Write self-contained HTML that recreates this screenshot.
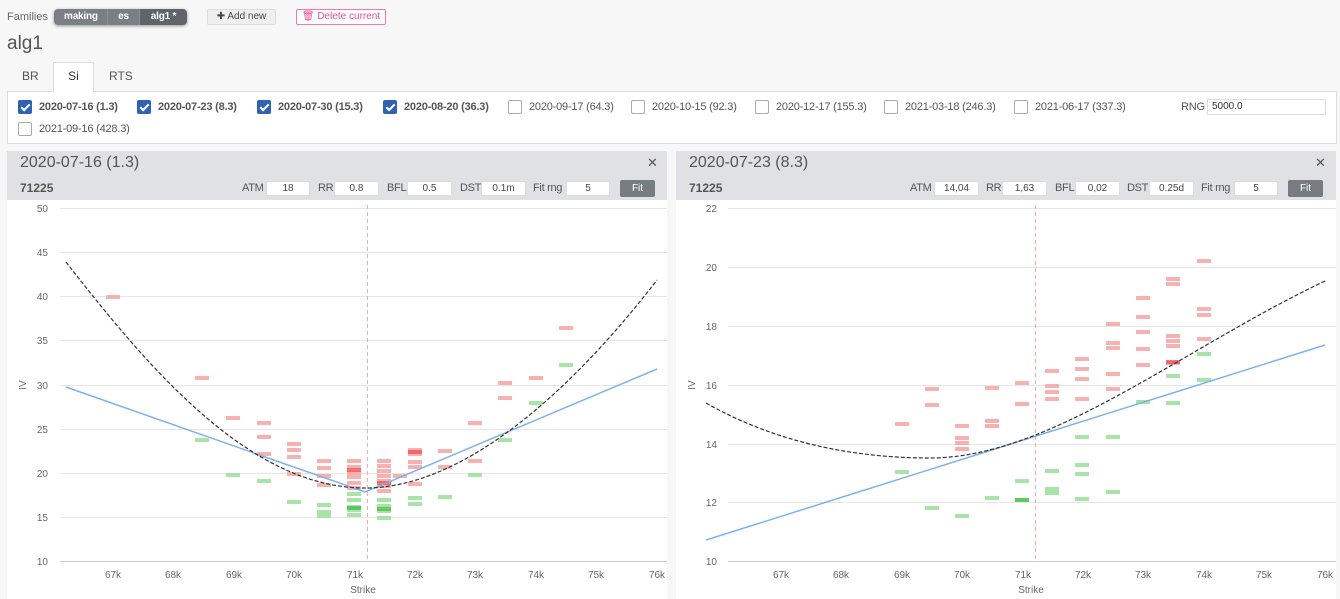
<!DOCTYPE html>
<html><head><meta charset="utf-8"><style>
*{box-sizing:border-box}
body{margin:0;width:1340px;height:599px;overflow:hidden;background:#f7f7f7;font-family:"Liberation Sans",sans-serif;color:#555;font-size:11px}
.abs{position:absolute}
.seg{background:#7a7f86;color:#fff;font-weight:bold;font-size:10px;height:16px;line-height:16px;padding:0 10px;display:inline-block;border-right:1px solid #8c9096;letter-spacing:-0.2px}
.inp{background:#fff;border:1px solid #ddd;border-radius:2px;height:15px;text-align:center;font-size:10px;line-height:14px;color:#444;position:absolute}
.lbl{position:absolute;font-size:11px;color:#555;letter-spacing:-0.3px}
.cb{position:absolute;width:14px;height:14px;border:1px solid #aaa;border-radius:2px;background:#fff}
.cb.on{background:#2f62b5;border-color:#2f62b5}
.cb.on:after{content:"";position:absolute;left:4px;top:1px;width:3px;height:7px;border:solid #fff;border-width:0 2px 2px 0;transform:rotate(45deg)}
.ct{position:absolute;font-size:11px;color:#555;letter-spacing:-0.2px}
.ct.b{font-weight:bold}
</style></head><body>
<div class="abs" style="left:7px;top:11px;font-size:11px;color:#666">Families</div>
<div class="abs" style="left:54px;top:9px;border-radius:4px;overflow:hidden;box-shadow:0 1px 3px rgba(0,0,0,.4);height:16px;white-space:nowrap;font-size:0"><span class="seg" style="width:54px">making</span><span class="seg" style="width:32px;text-align:center">es</span><span class="seg" style="background:#5f646b;border:0;width:47px;text-align:center">alg1 *</span></div>
<div class="abs" style="left:207px;top:9px;width:69px;height:16px;border:1px solid #ddd;background:#efefef;border-radius:2px;font-size:10px;text-align:center;line-height:14px;color:#444">✚ Add new</div>
<div class="abs" style="left:296px;top:9px;width:90px;height:16px;border:1px solid #f07ab0;background:#fff;border-radius:2px;font-size:10px;text-align:center;line-height:14px;color:#ea4c9a">🗑 Delete current</div>
<div class="abs" style="left:7px;top:33px;font-size:19px;color:#555">alg1</div>
<div class="abs" style="left:7px;top:91px;width:1330px;height:1px;background:#ddd"></div>
<div class="abs" style="left:22px;top:69px;font-size:12px;color:#555">BR</div>
<div class="abs" style="left:53px;top:62px;width:41px;height:31px;background:#fff;border:1px solid #ddd;border-bottom:none;text-align:center;line-height:27px;font-size:12px;color:#333">Si</div>
<div class="abs" style="left:109px;top:69px;font-size:12px;color:#555">RTS</div>
<div class="abs" style="left:7px;top:92px;width:1330px;height:52px;background:#fff;border:1px solid #ddd;border-top:none"></div>
<div class="cb on" style="left:18px;top:100px"></div><div class="ct b" style="left:39px;top:101px">2020-07-16 (1.3)</div>
<div class="cb on" style="left:137px;top:100px"></div><div class="ct b" style="left:158px;top:101px">2020-07-23 (8.3)</div>
<div class="cb on" style="left:257px;top:100px"></div><div class="ct b" style="left:278px;top:101px">2020-07-30 (15.3)</div>
<div class="cb on" style="left:383px;top:100px"></div><div class="ct b" style="left:404px;top:101px">2020-08-20 (36.3)</div>
<div class="cb" style="left:508px;top:100px"></div><div class="ct" style="left:529px;top:101px">2020-09-17 (64.3)</div>
<div class="cb" style="left:631px;top:100px"></div><div class="ct" style="left:652px;top:101px">2020-10-15 (92.3)</div>
<div class="cb" style="left:755px;top:100px"></div><div class="ct" style="left:776px;top:101px">2020-12-17 (155.3)</div>
<div class="cb" style="left:884px;top:100px"></div><div class="ct" style="left:905px;top:101px">2021-03-18 (246.3)</div>
<div class="cb" style="left:1014px;top:100px"></div><div class="ct" style="left:1035px;top:101px">2021-06-17 (337.3)</div>
<div class="ct" style="left:1181px;top:101px">RNG</div>
<div class="abs" style="left:1207px;top:99px;width:119px;height:16px;border:1px solid #ddd;font-size:10px;line-height:14px;padding-left:4px;color:#333">5000.0</div>
<div class="cb" style="left:18px;top:122px"></div><div class="ct" style="left:39px;top:123px">2021-09-16 (428.3)</div>

<div class="abs" style="left:7px;top:151px;width:660px;height:448px;background:#fff"></div>
<div class="abs" style="left:7px;top:151px;width:660px;height:49px;background:#dfe1e5"></div>
<div class="abs" style="left:20px;top:154px;font-size:16px;color:#555">2020-07-16 (1.3)</div>
<div class="abs" style="left:647px;top:155px;font-size:13px;color:#555">✕</div>
<div class="abs" style="left:20px;top:181px;font-size:12px;font-weight:bold;color:#555">71225</div>
<div class="lbl" style="left:242px;top:182px">ATM</div><div class="inp" style="left:266px;top:181px;width:44px">18</div>
<div class="lbl" style="left:318px;top:182px">RR</div><div class="inp" style="left:334px;top:181px;width:45px">0.8</div>
<div class="lbl" style="left:387px;top:182px">BFL</div><div class="inp" style="left:407px;top:181px;width:45px">0.5</div>
<div class="lbl" style="left:460px;top:182px">DST</div><div class="inp" style="left:481px;top:181px;width:45px">0.1m</div>
<div class="lbl" style="left:533px;top:182px">Fit rng</div><div class="inp" style="left:566px;top:181px;width:44px">5</div>
<div class="abs" style="left:620px;top:180px;width:35px;height:17px;background:#777c83;border-radius:2px;color:#fff;font-size:10px;text-align:center;line-height:17px">Fit</div>

<div class="abs" style="left:676px;top:151px;width:660px;height:448px;background:#fff"></div>
<div class="abs" style="left:676px;top:151px;width:660px;height:49px;background:#dfe1e5"></div>
<div class="abs" style="left:689px;top:154px;font-size:16px;color:#555">2020-07-23 (8.3)</div>
<div class="abs" style="left:1315px;top:155px;font-size:13px;color:#555">✕</div>
<div class="abs" style="left:689px;top:181px;font-size:12px;font-weight:bold;color:#555">71225</div>
<div class="lbl" style="left:910px;top:182px">ATM</div><div class="inp" style="left:934px;top:181px;width:45px">14,04</div>
<div class="lbl" style="left:986px;top:182px">RR</div><div class="inp" style="left:1002px;top:181px;width:45px">1,63</div>
<div class="lbl" style="left:1055px;top:182px">BFL</div><div class="inp" style="left:1075px;top:181px;width:45px">0,02</div>
<div class="lbl" style="left:1127px;top:182px">DST</div><div class="inp" style="left:1149px;top:181px;width:45px">0.25d</div>
<div class="lbl" style="left:1201px;top:182px">Fit rng</div><div class="inp" style="left:1234px;top:181px;width:44px">5</div>
<div class="abs" style="left:1288px;top:180px;width:35px;height:17px;background:#777c83;border-radius:2px;color:#fff;font-size:10px;text-align:center;line-height:17px">Fit</div>

<svg class="abs" style="left:0;top:0" width="1340" height="599" font-family="Liberation Sans, sans-serif" font-size="10" fill="#666">
<g stroke="#e6e6e6" stroke-width="1">
<line x1="60" y1="208.5" x2="667" y2="208.5"/><line x1="60" y1="252.5" x2="667" y2="252.5"/><line x1="60" y1="296.5" x2="667" y2="296.5"/><line x1="60" y1="340.5" x2="667" y2="340.5"/><line x1="60" y1="385.5" x2="667" y2="385.5"/><line x1="60" y1="429.5" x2="667" y2="429.5"/><line x1="60" y1="473.5" x2="667" y2="473.5"/><line x1="60" y1="517.5" x2="667" y2="517.5"/><line x1="60" y1="561.5" x2="667" y2="561.5" stroke="#ccc"/>
<line x1="728" y1="208.5" x2="1336" y2="208.5"/><line x1="728" y1="267.5" x2="1336" y2="267.5"/><line x1="728" y1="326.5" x2="1336" y2="326.5"/><line x1="728" y1="385.5" x2="1336" y2="385.5"/><line x1="728" y1="444.5" x2="1336" y2="444.5"/><line x1="728" y1="502.5" x2="1336" y2="502.5"/><line x1="728" y1="561.5" x2="1336" y2="561.5" stroke="#ccc"/>
</g>
<g text-anchor="end">
<text x="48" y="212">50</text><text x="48" y="256">45</text><text x="48" y="300">40</text><text x="48" y="344">35</text><text x="48" y="389">30</text><text x="48" y="433">25</text><text x="48" y="477">20</text><text x="48" y="521">15</text><text x="48" y="565">10</text>
<text x="717" y="212">22</text><text x="717" y="271">20</text><text x="717" y="330">18</text><text x="717" y="389">16</text><text x="717" y="448">14</text><text x="717" y="506">12</text><text x="717" y="565">10</text>
</g>
<g text-anchor="middle">
<text x="113" y="578">67k</text><text x="173" y="578">68k</text><text x="234" y="578">69k</text><text x="294" y="578">70k</text><text x="355" y="578">71k</text><text x="415" y="578">72k</text><text x="475" y="578">73k</text><text x="536" y="578">74k</text><text x="596" y="578">75k</text><text x="657" y="578">76k</text>
<text x="781" y="578">67k</text><text x="841" y="578">68k</text><text x="902" y="578">69k</text><text x="962" y="578">70k</text><text x="1023" y="578">71k</text><text x="1083" y="578">72k</text><text x="1143" y="578">73k</text><text x="1204" y="578">74k</text><text x="1264" y="578">75k</text><text x="1325" y="578">76k</text>
<text x="363" y="593">Strike</text><text x="1031" y="593">Strike</text>
<text transform="translate(26,385) rotate(-90)">IV</text><text transform="translate(695,385) rotate(-90)">IV</text>
</g>
<line x1="367.5" y1="205" x2="367.5" y2="561" stroke="#f5a8b0" stroke-dasharray="4,3"/>
<line x1="1035.5" y1="205" x2="1035.5" y2="561" stroke="#f5a8b0" stroke-dasharray="4,3"/>
<g fill="#f7a4a4" opacity="0.85">
<rect x="106" y="295" width="14" height="4"/><rect x="195" y="376" width="14" height="4"/><rect x="226" y="416" width="14" height="4"/>
<rect x="257" y="421" width="14" height="4"/><rect x="257" y="435" width="14" height="4"/><rect x="257" y="452" width="14" height="4"/>
<rect x="287" y="442" width="14" height="4"/><rect x="287" y="448" width="14" height="4"/><rect x="287" y="455" width="14" height="4"/><rect x="287" y="472" width="14" height="4"/>
<rect x="317" y="459" width="14" height="4"/><rect x="317" y="466" width="14" height="4"/><rect x="317" y="474" width="14" height="4"/><rect x="317" y="483" width="14" height="4"/>
<rect x="347" y="459" width="14" height="4"/><rect x="347" y="465" width="14" height="4"/><rect x="347" y="471" width="14" height="4"/><rect x="347" y="475" width="14" height="4"/><rect x="347" y="481" width="14" height="4"/><rect x="347" y="486" width="14" height="4"/>
<rect x="377" y="459" width="14" height="4"/><rect x="377" y="464" width="14" height="4"/><rect x="377" y="469" width="14" height="4"/><rect x="377" y="474" width="14" height="4"/><rect x="377" y="479" width="14" height="4"/><rect x="377" y="484" width="14" height="4"/><rect x="377" y="489" width="14" height="4"/>
<rect x="393" y="474" width="14" height="4"/>
<rect x="408" y="448" width="14" height="4"/><rect x="408" y="452" width="14" height="4"/><rect x="408" y="460" width="14" height="4"/><rect x="408" y="465" width="14" height="4"/><rect x="408" y="482" width="14" height="4"/>
<rect x="438" y="449" width="14" height="4"/><rect x="438" y="465" width="14" height="4"/><rect x="468" y="421" width="14" height="4"/><rect x="468" y="459" width="14" height="4"/>
<rect x="498" y="381" width="14" height="4"/><rect x="498" y="396" width="14" height="4"/><rect x="529" y="376" width="14" height="4"/><rect x="559" y="326" width="14" height="4"/>
<rect x="895" y="422" width="14" height="4"/><rect x="925" y="387" width="14" height="4"/><rect x="925" y="403" width="14" height="4"/>
<rect x="955" y="424" width="14" height="4"/><rect x="955" y="436" width="14" height="4"/><rect x="955" y="441" width="14" height="4"/><rect x="955" y="447" width="14" height="4"/>
<rect x="985" y="386" width="14" height="4"/><rect x="985" y="419" width="14" height="4"/><rect x="985" y="424" width="14" height="4"/>
<rect x="1015" y="381" width="14" height="4"/><rect x="1015" y="402" width="14" height="4"/>
<rect x="1045" y="369" width="14" height="4"/><rect x="1045" y="384" width="14" height="4"/><rect x="1045" y="390" width="14" height="4"/><rect x="1045" y="397" width="14" height="4"/>
<rect x="1075" y="357" width="14" height="4"/><rect x="1075" y="367" width="14" height="4"/><rect x="1075" y="377" width="14" height="4"/><rect x="1075" y="397" width="14" height="4"/>
<rect x="1106" y="322" width="14" height="4"/><rect x="1106" y="341" width="14" height="4"/><rect x="1106" y="346" width="14" height="4"/><rect x="1106" y="372" width="14" height="4"/><rect x="1106" y="387" width="14" height="4"/>
<rect x="1136" y="296" width="14" height="4"/><rect x="1136" y="315" width="14" height="4"/><rect x="1136" y="330" width="14" height="4"/><rect x="1136" y="347" width="14" height="4"/><rect x="1136" y="363" width="14" height="4"/>
<rect x="1166" y="277" width="14" height="4"/><rect x="1166" y="282" width="14" height="4"/><rect x="1166" y="334" width="14" height="4"/><rect x="1166" y="339" width="14" height="4"/><rect x="1166" y="344" width="14" height="4"/><rect x="1166" y="361" width="14" height="4"/>
<rect x="1197" y="259" width="14" height="4"/><rect x="1197" y="307" width="14" height="4"/><rect x="1197" y="313" width="14" height="4"/><rect x="1197" y="337" width="14" height="4"/>
</g>
<g fill="#ee5555" opacity="0.8"><rect x="347" y="468" width="14" height="4"/><rect x="377" y="481" width="14" height="4"/><rect x="408" y="450" width="14" height="4"/><rect x="1166" y="360" width="14" height="4"/></g>
<g fill="#9fe09f" opacity="0.9">
<rect x="195" y="438" width="14" height="4"/><rect x="226" y="473" width="14" height="4"/><rect x="257" y="479" width="14" height="4"/><rect x="287" y="500" width="14" height="4"/>
<rect x="317" y="503" width="14" height="4"/><rect x="317" y="510" width="14" height="4"/><rect x="317" y="514" width="14" height="4"/>
<rect x="347" y="492" width="14" height="4"/><rect x="347" y="498" width="14" height="4"/><rect x="347" y="505" width="14" height="4"/><rect x="347" y="508" width="14" height="4"/><rect x="347" y="513" width="14" height="4"/>
<rect x="377" y="498" width="14" height="4"/><rect x="377" y="504" width="14" height="4"/><rect x="377" y="509" width="14" height="4"/><rect x="377" y="516" width="14" height="4"/>
<rect x="408" y="496" width="14" height="4"/><rect x="408" y="502" width="14" height="4"/><rect x="438" y="495" width="14" height="4"/><rect x="468" y="473" width="14" height="4"/>
<rect x="498" y="438" width="14" height="4"/><rect x="529" y="401" width="14" height="4"/><rect x="559" y="363" width="14" height="4"/>
<rect x="895" y="470" width="14" height="4"/><rect x="925" y="506" width="14" height="4"/><rect x="955" y="514" width="14" height="4"/><rect x="985" y="496" width="14" height="4"/>
<rect x="1015" y="479" width="14" height="4"/><rect x="1015" y="498" width="14" height="4"/>
<rect x="1045" y="469" width="14" height="4"/><rect x="1045" y="487" width="14" height="4"/><rect x="1045" y="491" width="14" height="4"/>
<rect x="1075" y="435" width="14" height="4"/><rect x="1075" y="463" width="14" height="4"/><rect x="1075" y="472" width="14" height="4"/><rect x="1075" y="497" width="14" height="4"/>
<rect x="1106" y="435" width="14" height="4"/><rect x="1106" y="490" width="14" height="4"/><rect x="1136" y="400" width="14" height="4"/>
<rect x="1166" y="374" width="14" height="4"/><rect x="1166" y="401" width="14" height="4"/><rect x="1197" y="352" width="14" height="4"/><rect x="1197" y="378" width="14" height="4"/>
</g>
<g fill="#4cc04c" opacity="0.8"><rect x="347" y="506" width="14" height="4"/><rect x="377" y="507" width="14" height="4"/><rect x="1015" y="498" width="14" height="4"/></g>
<g fill="none" stroke-width="1.5" stroke="#7fb2ea">
<polyline points="66,387 365,492 657,369"/>
<polyline points="706,540 1325,345"/>
</g>
<g fill="none" stroke="#333" stroke-width="1.2" stroke-dasharray="4,2">
<path d="M66,262 C150,370 250,488 365,488 C470,488 580,380 657,280"/>
<path d="M706,403 C780,445 860,458 930,458 C1050,458 1180,350 1325,281"/>
</g>
</svg>
</body></html>
